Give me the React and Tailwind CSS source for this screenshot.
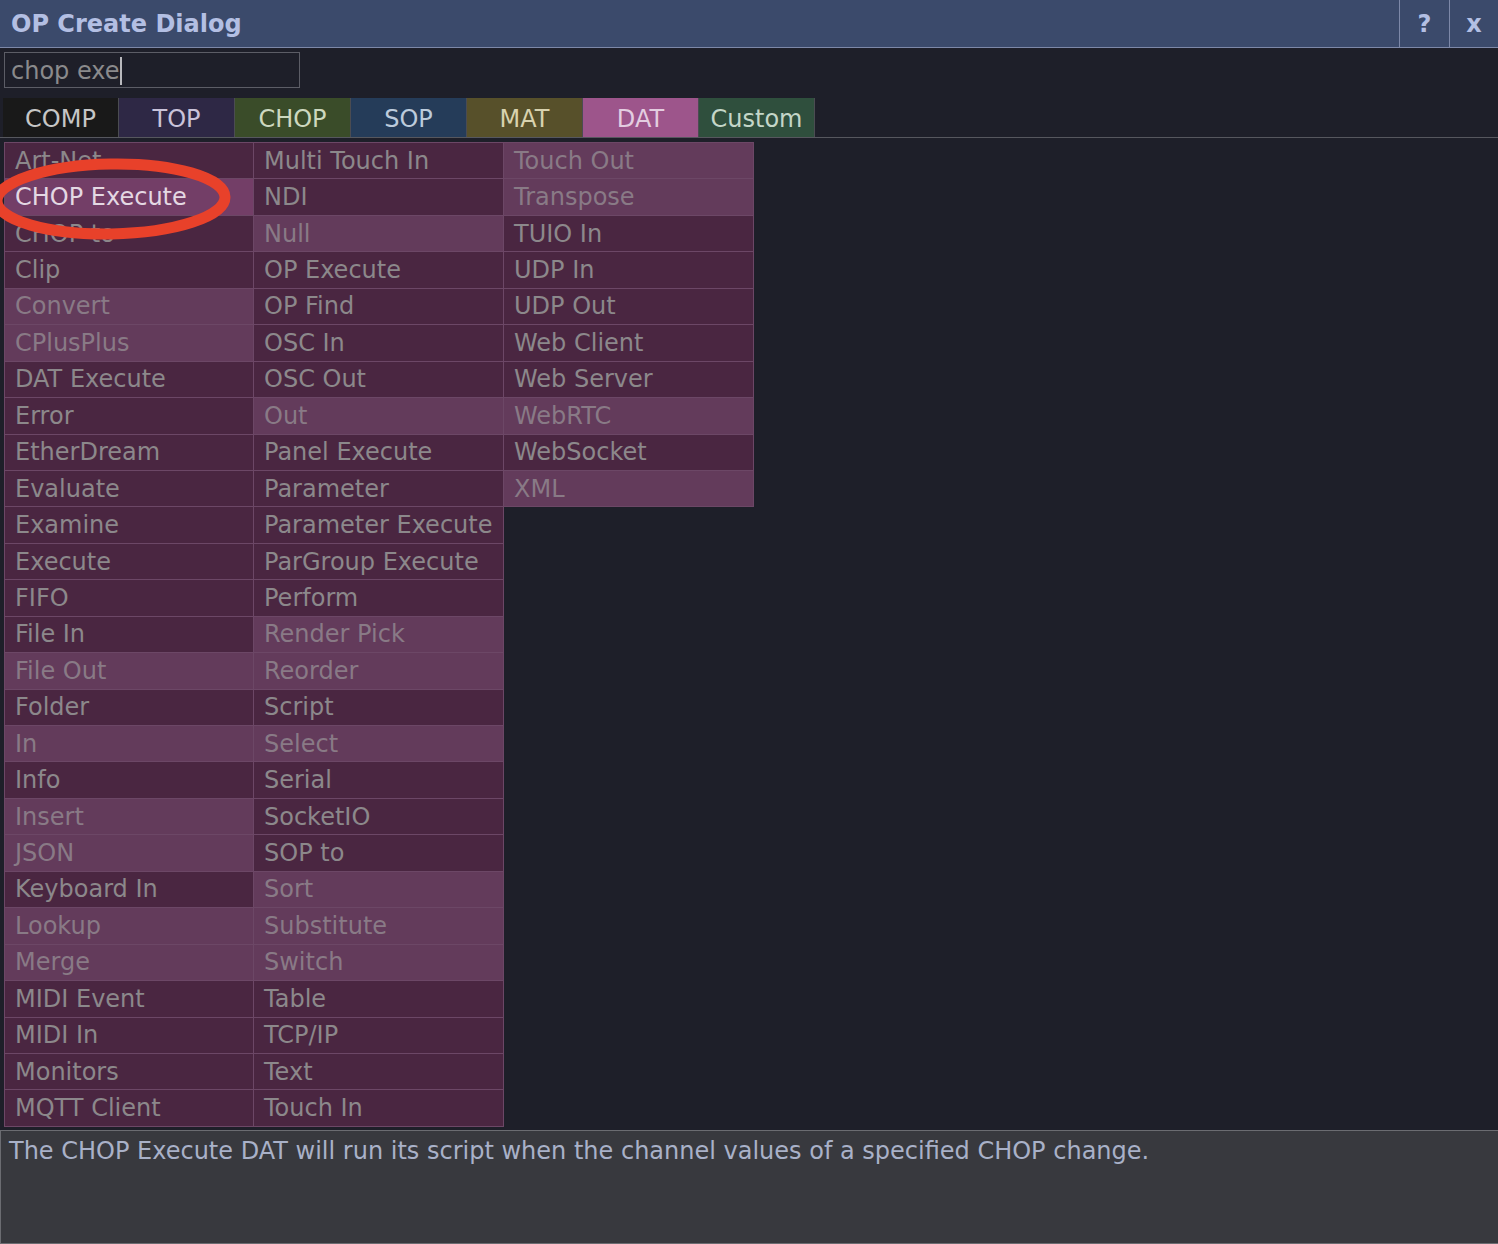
const col1 = [
  ["Art-Net", 0],
  ["CHOP Execute", 2],
  ["CHOP to", 0],
  ["Clip", 0],
  ["Convert", 1],
  ["CPlusPlus", 1],
  ["DAT Execute", 0],
  ["Error", 0],
  ["EtherDream", 0],
  ["Evaluate", 0],
  ["Examine", 0],
  ["Execute", 0],
  ["FIFO", 0],
  ["File In", 0],
  ["File Out", 1],
  ["Folder", 0],
  ["In", 1],
  ["Info", 0],
  ["Insert", 1],
  ["JSON", 1],
  ["Keyboard In", 0],
  ["Lookup", 1],
  ["Merge", 1],
  ["MIDI Event", 0],
  ["MIDI In", 0],
  ["Monitors", 0],
  ["MQTT Client", 0],
];

const col2 = [
  ["Multi Touch In", 0],
  ["NDI", 0],
  ["Null", 1],
  ["OP Execute", 0],
  ["OP Find", 0],
  ["OSC In", 0],
  ["OSC Out", 0],
  ["Out", 1],
  ["Panel Execute", 0],
  ["Parameter", 0],
  ["Parameter Execute", 0],
  ["ParGroup Execute", 0],
  ["Perform", 0],
  ["Render Pick", 1],
  ["Reorder", 1],
  ["Script", 0],
  ["Select", 1],
  ["Serial", 0],
  ["SocketIO", 0],
  ["SOP to", 0],
  ["Sort", 1],
  ["Substitute", 1],
  ["Switch", 1],
  ["Table", 0],
  ["TCP/IP", 0],
  ["Text", 0],
  ["Touch In", 0],
];

const col3 = [
  ["Touch Out", 1],
  ["Transpose", 1],
  ["TUIO In", 0],
  ["UDP In", 0],
  ["UDP Out", 0],
  ["Web Client", 0],
  ["Web Server", 0],
  ["WebRTC", 1],
  ["WebSocket", 0],
  ["XML", 1],
];

const tabs = [
  { label: "COMP", cls: "bg-[#191919] text-[#c6c6c6]" },
  { label: "TOP", cls: "bg-[#2e2845] text-[#c9c3da]" },
  { label: "CHOP", cls: "bg-[#3a4c29] text-[#cdd8bf]" },
  { label: "SOP", cls: "bg-[#253c59] text-[#bccbdc]" },
  { label: "MAT", cls: "bg-[#57502a] text-[#d8d2ae]" },
  { label: "DAT", cls: "bg-[#9d558b] text-[#e3cde0]" },
  { label: "Custom", cls: "bg-[#2f4f3d] text-[#c4d6c8]" },
];

function Cell({ name, kind }) {
  const styles = [
    "bg-[#4a2641] text-[#8c888b]",
    "bg-[#633b5b] text-[#897a86]",
    "bg-[#733e67] text-[#e4d8e3]",
  ];
  return (
    <div
      className={`h-[36.45px] flex items-center pl-[10px] border-b border-r border-[#6c4766] whitespace-nowrap ${styles[kind]}`}
    >
      {name}
    </div>
  );
}

function Column({ items, first }) {
  return (
    <div className={`w-[250px] flex flex-col border-t border-[#6c4766] ${first ? "border-l" : ""}`}>
      {items.map(([name, kind]) => (
        <Cell key={name} name={name} kind={kind} />
      ))}
    </div>
  );
}

export default function App() {
  return (
    <div
      className="w-[1498px] h-[1244px] flex flex-col bg-[#1e1f29] text-[24px] overflow-hidden"
      style={{ fontFamily: '"DejaVu Sans", Verdana, sans-serif' }}
    >
      {/* Title bar */}
      <div className="h-[48px] flex items-stretch bg-[#3b4a6b] border-b border-[#7d88a8] shrink-0">
        <div className="flex-1 flex items-center pl-[11px] font-bold text-[#b3bfe3] text-[24px]">
          OP Create Dialog
        </div>
        <div className="w-[50px] flex items-center justify-center border-l border-[#7d88a8] font-bold text-[#b3bfe3]">
          ?
        </div>
        <div className="w-[49px] flex items-center justify-center border-l border-[#7d88a8] font-bold text-[#b3bfe3]">
          x
        </div>
      </div>

      {/* Search */}
      <div className="pt-[4px] pl-[4px]">
        <div className="w-[296px] h-[36px] border border-[#5c5d66] flex items-center pl-[6px] pt-[2px] text-[#8a8a8c]">
          <span>chop exe</span>
          <span className="w-[2px] h-[28px] bg-[#b9b9bd]"></span>
        </div>
      </div>

      {/* Family tabs */}
      <div className="mt-[10px] pl-[3px] flex border-b border-[#56575e] shrink-0">
        {tabs.map((t) => (
          <div
            key={t.label}
            className={`w-[116px] h-[39px] flex items-center justify-center pt-[2px] border-r border-[#4b4c52] ${t.cls}`}
          >
            {t.label}
          </div>
        ))}
      </div>

      {/* Operator grid */}
      <div className="relative flex-1 pt-[4px] pl-[4px]">
        <div className="flex items-start">
          <Column items={col1} first />
          <Column items={col2} />
          <Column items={col3} />
        </div>
        <svg
          className="absolute left-0 top-[10px] pointer-events-none"
          width="260"
          height="110"
          viewBox="0 0 260 110"
        >
          <ellipse
            cx="111"
            cy="51"
            rx="114"
            ry="35"
            fill="none"
            stroke="#e8412a"
            strokeWidth="11"
            transform="rotate(-1 111 51)"
          />
        </svg>
      </div>

      {/* Description */}
      <div className="h-[114px] shrink-0 bg-[#38393e] border-t border-l border-b border-[#6b6c71] pl-[8px] pt-[2px] text-[#a9b1c8]">
        The CHOP Execute DAT will run its script when the channel values of a specified CHOP change.
      </div>
    </div>
  );
}
